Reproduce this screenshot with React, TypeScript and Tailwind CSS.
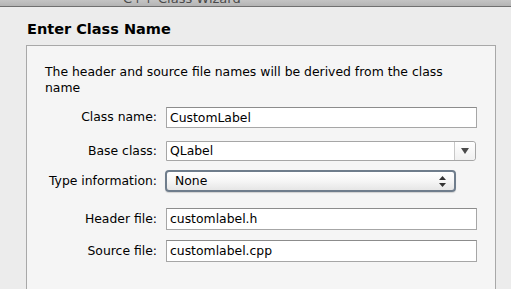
export default function App() {
  const font = { fontFamily: '"DejaVu Sans", "Lucida Grande", sans-serif' };
  return (
    <div className="w-[511px] h-[289px] overflow-hidden bg-[#ececec] text-black" style={font}>
      {/* window title bar, cut at the top */}
      <div className="h-[7px] relative overflow-hidden bg-gradient-to-b from-[#c4c4c4] to-[#b4b4b4] border-b border-[#707070]">
        <div className="absolute left-[123px] top-[-11px] text-[13px] text-[#4a4a4a]">C++ Class Wizard</div>
      </div>
      <div className="pl-[27px] pt-[13px] h-[38px] text-[14.5px] font-bold leading-[18px]">Enter Class Name</div>
      <div className="ml-[26px] w-[470px] h-[300px] bg-[#f5f5f5] border border-[#a8a8a8] pl-[18px] pt-[18px] text-[12.4px]">
        <p className="leading-[16px] w-[410px]">
          The header and source file names will be derived from the class name
        </p>
        <div className="mt-[11px] flex flex-col">
          <Row label="Class name:">
            <Field value="CustomLabel" h="h-[21px]" />
          </Row>
          <Row label="Base class:" mt="mt-[13px]">
            <div className="w-[310px] h-[20px] flex bg-white border border-[#a6a6a6] rounded-r-[3px]">
              <div className="flex-1 pl-[3px] leading-[18px]">QLabel</div>
              <div className="w-[21px] border-l border-[#c8c8c8] flex items-center justify-center bg-gradient-to-b from-white to-[#f0f0f0] rounded-r-[3px]">
                <svg width="8" height="6" viewBox="0 0 8 6"><path d="M0 0H8L4 6Z" fill="#4a4a4a" /></svg>
              </div>
            </div>
          </Row>
          <Row label="Type information:" mt="mt-[9px]">
            <div className="w-[291px] h-[22px] -ml-[1px] rounded-[4px] border-2 border-[#6f7d8c] bg-gradient-to-b from-white via-[#f6f6f6] to-[#e6e6e6] flex items-center pl-[8px] pr-[8px] shadow-[0_1px_1px_rgba(0,0,0,0.15)]">
              <span className="flex-1 leading-[18px]">None</span>
              <svg width="7" height="11" viewBox="0 0 7 11"><path d="M0 4L3.5 0L7 4Z M0 7L3.5 11L7 7Z" fill="#333" /></svg>
            </div>
          </Row>
          <Row label="Header file:" mt="mt-[16px]">
            <Field value="customlabel.h" h="h-[22px]" />
          </Row>
          <Row label="Source file:" mt="mt-[10px]">
            <Field value="customlabel.cpp" h="h-[22px]" />
          </Row>
        </div>
      </div>
    </div>
  );
}

function Row({ label, children, mt = "" }: { label: string; children: React.ReactNode; mt?: string }) {
  return (
    <div className={`flex items-center ${mt}`}>
      <div className="w-[112px] text-right whitespace-nowrap">{label}</div>
      <div className="ml-[9px]">{children}</div>
    </div>
  );
}

function Field({ value, h }: { value: string; h: string }) {
  return (
    <div className={`w-[311px] ${h} bg-white border border-[#a6a6a6] border-t-[#8c8c8c] pl-[3px] leading-[19px]`}>
      {value}
    </div>
  );
}
